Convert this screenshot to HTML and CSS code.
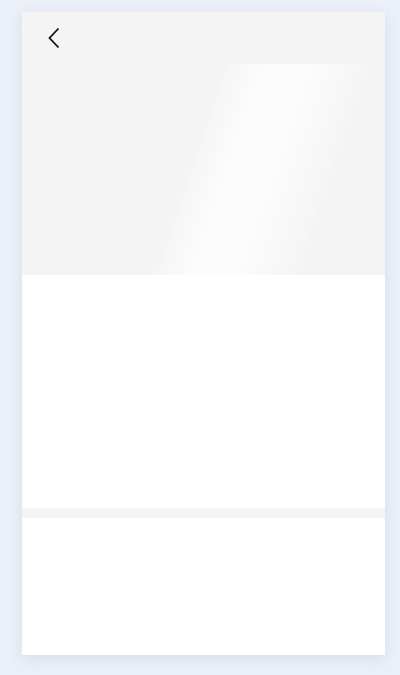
FILE: index.html
```html
<!DOCTYPE html>
<html lang="en">
<head>
<meta charset="utf-8">
<title>Loading</title>
<link rel="stylesheet" href="styles.css">
</head>
<body>
  <div class="card">
    <div class="hero">
      <button class="back" aria-label="Back">
        <svg width="14" height="22" viewBox="0 0 14 22"><path d="M11.5 1.5 L2.5 11 L11.5 20.5" fill="none" stroke="#111" stroke-width="1.8"/></svg>
      </button>
      <div class="shimmer"></div>
    </div>
    <div class="block-a"></div>
    <div class="divider"></div>
    <div class="block-b"></div>
  </div>
</body>
</html>
```

FILE: styles.css
```css
html, body {
  margin: 0;
  padding: 0;
}
body {
  background: #ebf0f9;
  width: 400px;
  height: 675px;
  overflow: hidden;
  padding-top: 12px;
  box-sizing: border-box;
  font-family: "Liberation Sans", Arial, sans-serif;
}
.card {
  width: 363px;
  height: 643px;
  margin-left: 22px;
  background: #fff;
  display: flex;
  flex-direction: column;
  box-shadow: 0 4px 14px rgba(120, 140, 170, 0.18);
}
.hero {
  position: relative;
  height: 263px;
  background: #f4f4f4;
  overflow: hidden;
}
.back {
  position: absolute;
  left: 25px;
  top: 15px;
  border: 0;
  padding: 0;
  background: none;
  width: 14px;
  height: 22px;
}
.shimmer {
  position: absolute;
  left: 170px;
  top: 52px;
  width: 140px;
  height: 211px;
  transform: skewX(-19deg);
  background: linear-gradient(90deg, rgba(255,255,255,0.15) 0%, rgba(255,255,255,0.8) 30%, rgba(255,255,255,0.75) 55%, rgba(255,255,255,0.1) 100%);
}
.block-a {
  height: 233px;
  background: #fff;
}
.divider {
  height: 10px;
  background: #f4f4f4;
}
.block-b {
  flex: 1;
  background: #fff;
}
```
